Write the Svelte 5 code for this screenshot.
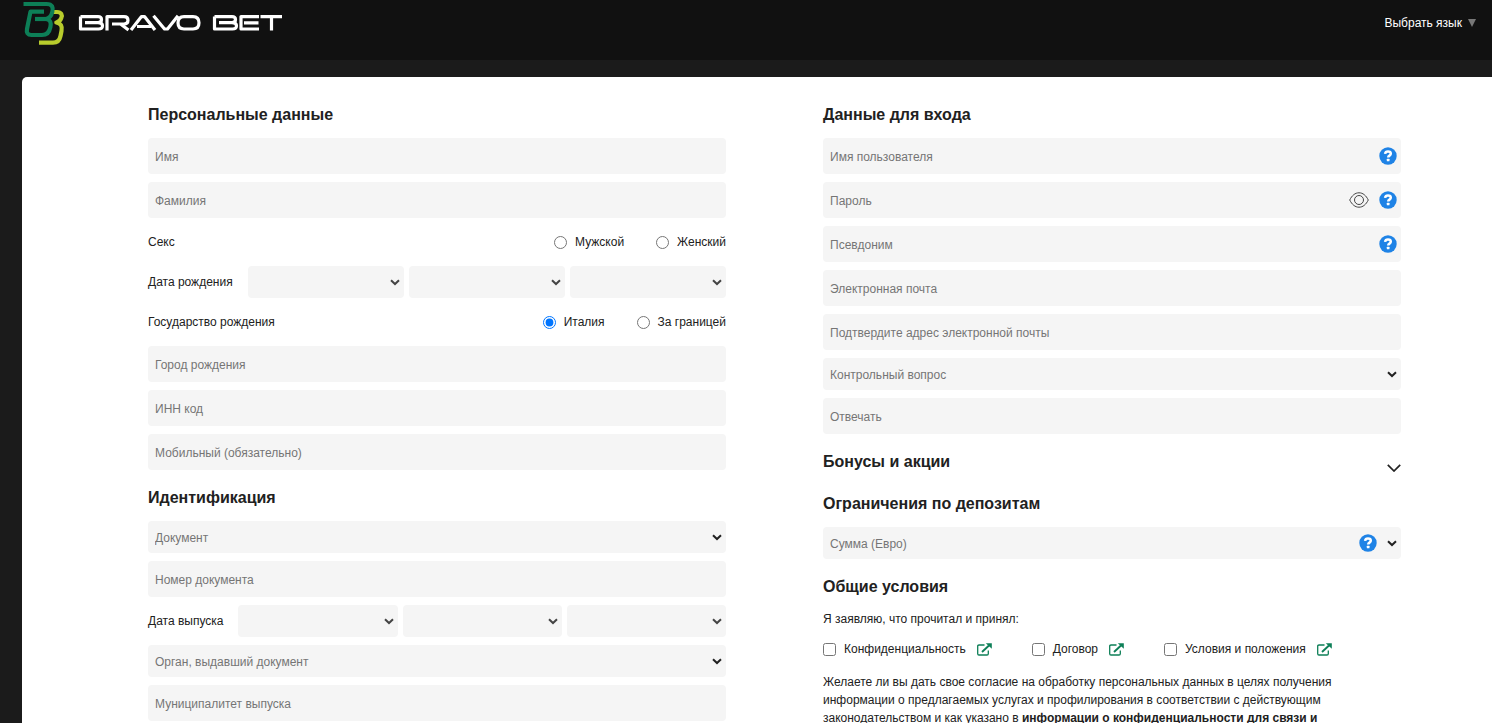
<script lang="ts">
  let sex = $state('');
  let country = $state('it');
  let showPassword = $state(false);
  let bonusOpen = $state(false);

  const dateParts = ['День', 'Месяц', 'Год'];
  const consents = ['Конфиденциальность', 'Договор', 'Условия и положения'];
</script>

{#snippet chevron()}
  <svg class="chevron" viewBox="0 0 10 7" width="10" height="7" aria-hidden="true">
    <path d="M1 1.2 5 5 9 1.2" fill="none" stroke="currentColor" stroke-width="2" />
  </svg>
{/snippet}

{#snippet help()}
  <button class="icon-btn" type="button" aria-label="Помощь">
    <svg viewBox="0 0 18 18" width="18" height="18">
      <circle cx="9" cy="9" r="8.7" fill="#1f83e6" />
      <path
        d="M6.1 6.9C6.3 5.2 7.4 4.6 9 4.6c1.7 0 2.8.8 2.8 2.2 0 1.9-2.6 1.8-2.6 3.7"
        fill="none"
        stroke="#fff"
        stroke-width="2.5"
      />
      <rect x="7.8" y="11.8" width="2.7" height="2.5" rx="0.5" fill="#fff" />
    </svg>
  </button>
{/snippet}

{#snippet field(label: string)}
  <div class="field">
    <input type="text" placeholder={label} aria-label={label} />
  </div>
{/snippet}

{#snippet dropdown(label: string)}
  <div class="field">
    <select aria-label={label}><option>{label}</option></select>
    {@render chevron()}
  </div>
{/snippet}

{#snippet dateRow(label: string)}
  <div class="row row--date" role="group" aria-label={label}>
    <span>{label}</span>
    <div class="dates">
      {#each dateParts as part}
        <div class="field field--date">
          <select aria-label={part}><option></option></select>
          {@render chevron()}
        </div>
      {/each}
    </div>
  </div>
{/snippet}

<header class="header">
  <a class="logo" href="/" aria-label="Bravo Bet">
    <svg viewBox="0 0 264 48" width="264" height="48" fill="none">
      <g stroke-width="4.2" stroke-linejoin="round">
        <path
          d="M31 12h4c4.500 0 5.500 3 4.300 6-1 2.800-2.500 4-5 4.500 4.500.8 6.200 3.500 5.200 8.500l-1 5c-.9 4.500-3.500 6.700-7.500 6.700H17"
          stroke="#b8cc2c"
        />
        <path
          d="M1.500 4h23c6 0 7 3.500 5.800 8-1 4-3 6.300-6.300 7 4.500.8 5.300 3.800 4.400 8-1 5.300-3.500 8-8.400 8H9.500c-4 0-5.200-2.500-4.500-6L8.500 11.700H22"
          stroke="#0d7f57"
        />
        <path d="M13 19H24" stroke="#0d7f57" />
      </g>
      <g stroke="#fff" stroke-width="3.2" stroke-linejoin="round">
        <path d="M58.500 16.600H76q3.500 0 3.500 3t-3.500 3H63M76 22.600q4.500 0 4.500 3.200T76.500 29H58.500V16.600" />
        <path d="M85 30.500V16.600H102q4 0 4 3.700t-4 3.700H90M98.500 24l8 6" />
        <path d="M109 30 119.500 16.600h3L133 30M115 26.500h14" />
        <path d="M131.500 15.800 142.500 29h3L156 15.800" />
        <path d="M162 16.600h9q6 0 6 6.200t-6 6.200h-9q-6 0-6-6.200t6-6.200Z" />
        <path d="M192.500 16.600H210q3.500 0 3.500 3t-3.500 3H197M210 22.600q4.500 0 4.500 3.200T210.500 29H192.500V16.600" />
        <path d="M237 16.600H219V29H237M222 22.800h14.500" />
        <path d="M238.500 16.600H260M249.500 16.600v14" />
      </g>
    </svg>
  </a>
  <button class="lang" type="button">Выбрать язык <span class="lang__arrow"></span></button>
</header>

<main class="card">
  <section>
    <h2>Персональные данные</h2>
    {@render field('Имя')}
    {@render field('Фамилия')}
    <div class="row" role="radiogroup" aria-label="Секс">
      <span>Секс</span>
      <div class="options">
        <label><input type="radio" value="m" bind:group={sex} />Мужской</label>
        <label><input type="radio" value="f" bind:group={sex} />Женский</label>
      </div>
    </div>
    {@render dateRow('Дата рождения')}
    <div class="row" role="radiogroup" aria-label="Государство рождения">
      <span>Государство рождения</span>
      <div class="options">
        <label><input type="radio" value="it" bind:group={country} />Италия</label>
        <label><input type="radio" value="abroad" bind:group={country} />За границей</label>
      </div>
    </div>
    {@render field('Город рождения')}
    {@render field('ИНН код')}
    {@render field('Мобильный (обязательно)')}

    <h2>Идентификация</h2>
    {@render dropdown('Документ')}
    {@render field('Номер документа')}
    {@render dateRow('Дата выпуска')}
    {@render dropdown('Орган, выдавший документ')}
    {@render field('Муниципалитет выпуска')}
  </section>

  <section>
    <h2>Данные для входа</h2>
    <div class="field">
      <input type="text" placeholder="Имя пользователя" aria-label="Имя пользователя" />
      <div class="field__icons">{@render help()}</div>
    </div>
    <div class="field">
      <input type={showPassword ? 'text' : 'password'} placeholder="Пароль" aria-label="Пароль" />
      <div class="field__icons">
        <button
          class="icon-btn"
          type="button"
          aria-label="Показать пароль"
          onclick={() => (showPassword = !showPassword)}
        >
          <svg viewBox="0 0 20 16" width="20" height="16" fill="none" stroke="#444">
            <path d="M.7 8C3 3.5 6 .8 10 .8S17 3.5 19.300 8C17 12.500 14 15.200 10 15.200S3 12.500.7 8Z" />
            <circle cx="10" cy="8" r="4.5" />
          </svg>
        </button>
        {@render help()}
      </div>
    </div>
    <div class="field">
      <input type="text" placeholder="Псевдоним" aria-label="Псевдоним" />
      <div class="field__icons">{@render help()}</div>
    </div>
    {@render field('Электронная почта')}
    {@render field('Подтвердите адрес электронной почты')}
    {@render dropdown('Контрольный вопрос')}
    {@render field('Отвечать')}

    <h2 class="toggle">
      <button type="button" aria-expanded={bonusOpen} onclick={() => (bonusOpen = !bonusOpen)}>
        Бонусы и акции
        <svg viewBox="0 0 14 8" width="14" height="8" fill="none" stroke="#222" stroke-width="1.7">
          <path d="M.8.8 7 7 13.200.8" />
        </svg>
      </button>
    </h2>

    <h2>Ограничения по депозитам</h2>
    <div class="field">
      <select aria-label="Сумма (Евро)"><option>Сумма (Евро)</option></select>
      <div class="field__icons field__icons--select">{@render help()}</div>
      {@render chevron()}
    </div>

    <h2>Общие условия</h2>
    <p>Я заявляю, что прочитал и принял:</p>
    <div class="consents">
      {#each consents as name}
        <div class="consent">
          <label><input type="checkbox" />{name}</label>
          <a href="#terms" aria-label={name}>
            <svg viewBox="0 0 15 13" width="15" height="13" fill="none" stroke="#0d7f57">
              <path d="M7.500 2H2Q.7 2 .7 3.300V10.700Q.7 12 2 12H10Q11.300 12 11.300 10.700V7.500" stroke-width="1.3" />
              <path d="M5 9 12 2.500" stroke-width="1.9" />
              <path d="M8.800.2H14.800V5.800Z" fill="#0d7f57" stroke="none" />
            </svg>
          </a>
        </div>
      {/each}
    </div>
    <p class="legal">
      Желаете ли вы дать свое согласие на обработку персональных данных в целях получения
      информации о предлагаемых услугах и профилирования в соответствии с действующим
      законодательством и как указано в <b>информации о конфиденциальности для связи и</b>
    </p>
  </section>
</main>

<style>
  :global(body) {
    background: #1b1b1b;
    color: #212121;
    font: 12px/18px 'Liberation Sans', Arial, sans-serif;
    overflow-x: hidden;
  }

  :global(html) {
    scrollbar-width: none;
  }

  .header {
    display: flex;
    justify-content: space-between;
    align-items: flex-start;
    height: 60px;
    box-sizing: border-box;
    padding: 0 16px 0 22px;
    background: #111;
  }

  .logo svg {
    display: block;
  }

  .lang {
    display: flex;
    align-items: center;
    gap: 6px;
    margin-top: 14px;
    padding: 0;
    border: 0;
    background: none;
    color: #fff;
    font: inherit;
  }

  .lang__arrow {
    border: 4px solid transparent;
    border-top: 8px solid #777;
    border-bottom: 0;
  }

  .card {
    display: grid;
    grid-template-columns: 1fr 1fr;
    gap: 97px;
    margin: 17px 0 0 22px;
    padding: 28px 91px 28px 126px;
    border-radius: 5px 0 0 5px;
    background: #fff;
  }

  h2 {
    margin: 18px 0 13px;
    font-size: 16px;
    line-height: 20px;
    font-weight: 700;
  }

  h2:first-child {
    margin-top: 0;
  }

  .field {
    display: flex;
    position: relative;
    margin-bottom: 8px;
  }

  .field:has(+ h2) {
    margin-bottom: 0;
  }

  .field input,
  .field select {
    width: 100%;
    height: 36px;
    box-sizing: border-box;
    padding: 2px 7px 0;
    border: 0;
    border-radius: 4px;
    background: #f5f5f5;
    color: #757575;
    font: inherit;
    appearance: none;
  }

  .field select {
    height: 32px;
  }

  .field input::placeholder {
    color: #757575;
  }

  .field__icons {
    display: flex;
    align-items: center;
    gap: 10px;
    position: absolute;
    top: 0;
    right: 4px;
    bottom: 0;
  }

  .field__icons--select {
    right: 24px;
  }

  .chevron {
    position: absolute;
    right: 4px;
    top: 13px;
    pointer-events: none;
  }

  .icon-btn {
    padding: 0;
    border: 0;
    background: none;
  }

  .icon-btn svg {
    display: block;
  }

  .row {
    display: flex;
    justify-content: space-between;
    align-items: center;
    height: 32px;
    margin-bottom: 8px;
  }

  .row--date {
    gap: 15px;
  }

  .dates {
    display: flex;
    flex: 1;
    gap: 5px;
  }

  .field--date {
    flex: 1;
    margin-bottom: 0;
    color: #444;
  }

  .options {
    display: flex;
    gap: 32px;
  }

  label {
    display: flex;
    align-items: center;
    gap: 8px;
  }

  label input {
    width: 13px;
    height: 13px;
    margin: 0;
  }

  .toggle {
    margin-bottom: 22px;
  }

  .toggle + h2 {
    margin-top: 0;
  }

  .toggle button {
    display: flex;
    justify-content: space-between;
    align-items: flex-end;
    width: 100%;
    padding: 0;
    border: 0;
    background: none;
    color: inherit;
    font: inherit;
  }

  p {
    margin: 0;
  }

  .consents {
    display: flex;
    gap: 40px;
    padding: 12px 0 15px;
  }

  .consent {
    display: flex;
    align-items: center;
    gap: 11px;
  }

  .consent svg {
    display: block;
  }

  .legal {
    max-width: 520px;
  }
</style>
